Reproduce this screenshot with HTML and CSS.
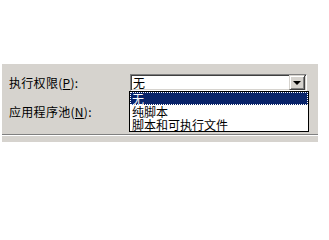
FILE: index.html
```html
<!DOCTYPE html>
<html lang="zh-CN">
<head>
<meta charset="utf-8">
<title>执行权限</title>
<link rel="stylesheet" href="styles.css">
</head>
<body>
<div class="panel">
  <div class="row">
    <span class="label">执行权限(<u>P</u>):</span>
    <div class="combo">
      <span class="value">无</span>
      <span class="btn"><span class="tri"></span></span>
      <ul class="list">
        <li class="sel"><span class="focus">无</span></li>
        <li>纯脚本</li>
        <li>脚本和可执行文件</li>
      </ul>
    </div>
  </div>
  <div class="row">
    <span class="label">应用程序池(<u>N</u>):</span>
  </div>
  <div class="sep"></div>
</div>
</body>
</html>
```

FILE: styles.css
```css
html, body {
  margin: 0;
  padding: 0;
  background: #ffffff;
}
body {
  font-family: "Noto Sans CJK SC", "Liberation Sans", sans-serif;
  font-size: 12px;
  color: #000;
}
.panel {
  margin: 64px 0 0 2px;
  width: 316px;
  height: 78px;
  background: #d6d3ce;
  box-sizing: border-box;
  padding: 10px 0 0 7px;
  display: flex;
  flex-direction: column;
  gap: 12px;
}
.row {
  display: flex;
  align-items: center;
  height: 17px;
}
.label {
  width: 118px;
  margin-right: 3px;
  line-height: 17px;
  white-space: nowrap;
  letter-spacing: 0.3px;
}
.label u {
  text-decoration: underline;
}
.combo {
  position: relative;
  width: 177px;
  height: 17px;
  box-sizing: border-box;
  background: #fff;
  border-top: 1px solid #808080;
  border-left: 1px solid #808080;
  border-right: 1px solid #ffffff;
  border-bottom: 1px solid #ffffff;
  box-shadow: inset 1px 1px 0 #404040, inset -1px -1px 0 #d6d3ce;
  display: flex;
  align-items: center;
  padding: 1px 1px 1px 2px;
}
.value {
  flex: 1;
  line-height: 15px;
}
.btn {
  width: 16px;
  height: 15px;
  box-sizing: border-box;
  background: #d6d3ce;
  border-top: 1px solid #d6d3ce;
  border-left: 1px solid #d6d3ce;
  border-right: 1px solid #404040;
  border-bottom: 1px solid #404040;
  box-shadow: inset 1px 1px 0 #fff, inset -1px -1px 0 #808080;
  display: flex;
  align-items: center;
  justify-content: center;
}
.tri {
  width: 0;
  height: 0;
  border-left: 4px solid transparent;
  border-right: 4px solid transparent;
  border-top: 4px solid #000;
  margin-top: 1px;
}
.list {
  position: absolute;
  z-index: 2;
  left: -2px;
  top: 16px;
  width: 180px;
  margin: 0;
  padding: 0;
  list-style: none;
  background: #fff;
  border: 1px solid #000;
  box-sizing: border-box;
}
.list li {
  height: 13px;
  line-height: 13px;
  padding-left: 2px;
  white-space: nowrap;
}
.list li.sel {
  background: #0a246a;
  color: #fff;
  padding: 0;
}
.focus {
  display: block;
  height: 13px;
  box-sizing: border-box;
  border: 1px dotted #fff;
  padding-left: 1px;
  line-height: 11px;
}
.sep {
  margin: 2px 0 0 -7px;
  height: 1px;
  width: 316px;
  background: #808080;
  border-bottom: 1px solid #fff;
}
```
